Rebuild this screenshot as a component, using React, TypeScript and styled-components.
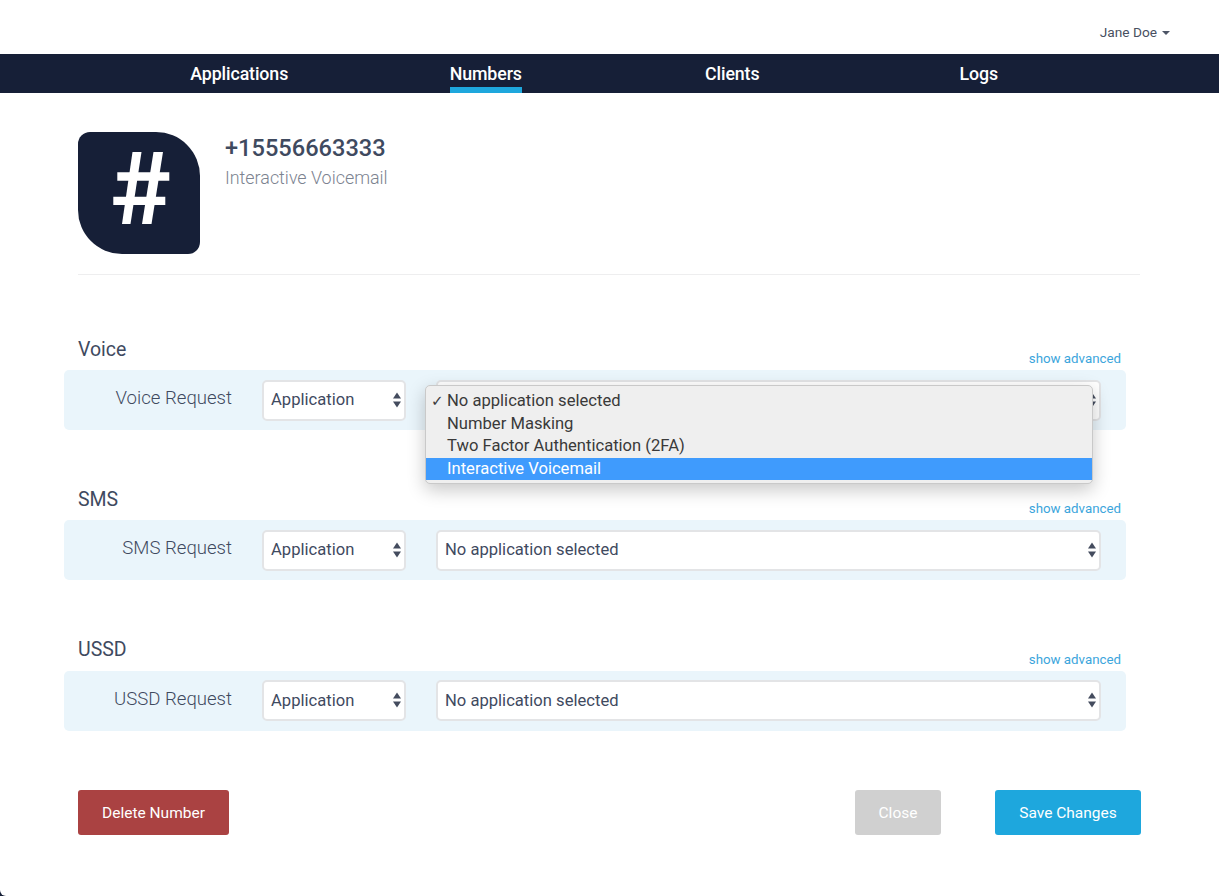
import React from "react";
import styled, { createGlobalStyle } from "styled-components";

const Global = createGlobalStyle`
  html, body { margin: 0; padding: 0; background: #161f37; }
  body { font-family: Roboto, "Liberation Sans", sans-serif; color: #3f4a5f; }
  * { box-sizing: border-box; }
`;

const Page = styled.div`
  width: 1219px;
  height: 896px;
  overflow: hidden;
  background: #fff;
  border-bottom-left-radius: 6px;
`;
const TopBar = styled.header`
  height: 54px;
  display: flex;
  justify-content: flex-end;
  align-items: center;
  gap: 5px;
  padding: 10px 49px 0 0;
  font-size: 13.7px;
  color: #48505f;
`;
const Caret = styled.span`
  width: 0;
  height: 0;
  margin-top: 2px;
  border-left: 4px solid transparent;
  border-right: 4px solid transparent;
  border-top: 4px solid #4d5566;
`;
const Nav = styled.nav`
  height: 39px;
  background: #161f37;
  display: grid;
  grid-template-columns: repeat(4, 246.5px);
  padding-left: 116px;
`;
const NavCell = styled.div`
  display: flex;
  justify-content: center;
`;
const NavItem = styled.a<{ $active?: boolean }>`
  color: #fff;
  font-size: 17.8px;
  font-weight: 500;
  line-height: 39px;
  letter-spacing: -0.1px;
  border-bottom: 6px solid ${(p) => (p.$active ? "#1ea7dd" : "transparent")};
  height: 39px;
`;
const Content = styled.main`
  padding: 39px 78px 0 78px;
`;
const Profile = styled.section`
  display: flex;
  gap: 25px;
  margin-right: 1px;
  padding-bottom: 20px;
  border-bottom: 1px solid #eeeeef;
`;
const Avatar = styled.div`
  width: 122px;
  height: 122px;
  background: #161f37;
  border-radius: 12px 44px 12px 44px;
  display: flex;
  align-items: center;
  justify-content: center;
`;
const HashMark = styled.svg`
  margin: 0 0 10px 5px;
`;
const Identity = styled.div`
  padding-top: 1px;
`;
const Number = styled.h1`
  margin: 0;
  font-size: 23.6px;
  line-height: 30px;
  font-weight: 500;
  color: #3f4a5f;
`;
const Subtitle = styled.div`
  margin-top: 4px;
  font-size: 17.9px;
  line-height: 22px;
  font-weight: 300;
  color: #7c8390;
`;
const Sections = styled.div`
  margin-top: 59px;
  margin-left: -14px;
  margin-right: 15px;
  display: flex;
  flex-direction: column;
  gap: 54.25px;
  position: relative;
`;
const SectionHead = styled.div`
  height: 36px;
  display: flex;
  justify-content: space-between;
  align-items: flex-start;
  padding: 0 5px 0 14px;
`;
const SectionTitle = styled.h2`
  margin: 2.5px 0 0;
  font-size: 19.5px;
  line-height: 26px;
  font-weight: 400;
  color: #3f4a5f;
`;
const Advanced = styled.a`
  margin-top: 16px;
  font-size: 13.3px;
  line-height: 18px;
  color: #3ba5dc;
`;
const Row = styled.div`
  height: 60px;
  background: #eaf5fb;
  border-radius: 5px;
  display: flex;
  align-items: center;
`;
const RowLabel = styled.label`
  width: 168px;
  text-align: right;
  font-size: 18.6px;
  font-weight: 300;
  color: #3f4a5f;
  margin-top: -4px;
`;
const SelectBox = styled.div<{ $w: number; $ml: number }>`
  width: ${(p) => p.$w}px;
  margin-left: ${(p) => p.$ml}px;
  height: 41px;
  background: #fff;
  border: 2px solid #e3e4e6;
  border-radius: 5px;
  display: flex;
  align-items: center;
  justify-content: space-between;
  padding: 0 2px 1px 7px;
  font-size: 16.6px;
  color: #3f4a5f;
`;
const Menu = styled.div`
  position: absolute;
  left: 361px;
  top: 51px;
  width: 668px;
  height: 99px;
  padding: 4px 0;
  background: #efefef;
  border: 1px solid #c9c9c9;
  border-radius: 5px;
  box-shadow: 0 6px 18px rgba(0, 0, 0, 0.22);
  display: flex;
  flex-direction: column;
`;
const MenuItem = styled.div<{ $hl?: boolean }>`
  height: 22.6px;
  line-height: 22.6px;
  padding-left: 21px;
  font-size: 16.6px;
  position: relative;
  color: ${(p) => (p.$hl ? "#fff" : "#3a3a3a")};
  background: ${(p) => (p.$hl ? "#3f9bfd" : "transparent")};
`;
const Check = styled.span`
  position: absolute;
  left: 5px;
  top: 0;
  font-size: 15px;
  font-family: "DejaVu Sans", sans-serif;
`;
const Footer = styled.footer`
  margin-top: 59.5px;
  display: flex;
  align-items: center;
`;
const Btn = styled.button<{ $bg: string; $w: number; $ml?: string }>`
  width: ${(p) => p.$w}px;
  height: 45px;
  margin-left: ${(p) => p.$ml || "0"};
  border: 0;
  border-radius: 3px;
  background: ${(p) => p.$bg};
  color: #fff;
  font-family: inherit;
  font-size: 15.5px;
  font-weight: 400;
`;

const Arrows = () => (
  <svg width="10" height="16" viewBox="0 0 10 16" fill="#444c5e">
    <path d="M5 0.5 L9 6.5 H1 Z" />
    <path d="M5 15.5 L9 9.5 H1 Z" />
  </svg>
);

const Hash = () => (
  <HashMark width="57" height="72" viewBox="0 0 57 72" fill="#fff">
    <path d="M19.5 0 H28.5 L17.5 72 H9 Z" />
    <path d="M40.5 0 H50 L38.5 72 H29 Z" />
    <path d="M4.3 20.3 H56.3 V28.7 H4.3 Z" />
    <path d="M0.3 44.7 H52.3 V53 H0.3 Z" />
  </HashMark>
);

const sections = [
  { title: "Voice", label: "Voice Request" },
  { title: "SMS", label: "SMS Request" },
  { title: "USSD", label: "USSD Request" },
];

export default function App() {
  return (
    <Page>
      <Global />
      <TopBar>
        Jane Doe <Caret />
      </TopBar>
      <Nav>
        <NavCell><NavItem>Applications</NavItem></NavCell>
        <NavCell><NavItem $active>Numbers</NavItem></NavCell>
        <NavCell><NavItem>Clients</NavItem></NavCell>
        <NavCell><NavItem>Logs</NavItem></NavCell>
      </Nav>
      <Content>
        <Profile>
          <Avatar><Hash /></Avatar>
          <Identity>
            <Number>+15556663333</Number>
            <Subtitle>Interactive Voicemail</Subtitle>
          </Identity>
        </Profile>
        <Sections>
          {sections.map((s, i) => (
            <div key={s.title}>
              <SectionHead>
                <SectionTitle>{s.title}</SectionTitle>
                <Advanced>show advanced</Advanced>
              </SectionHead>
              <Row>
                <RowLabel>{s.label}</RowLabel>
                <SelectBox $w={144} $ml={30}><span>Application</span><Arrows /></SelectBox>
                <SelectBox $w={665} $ml={30}><span>{i === 0 ? "" : "No application selected"}</span><Arrows /></SelectBox>
              </Row>
            </div>
          ))}
          <Menu>
            <MenuItem><Check>✓</Check>No application selected</MenuItem>
            <MenuItem>Number Masking</MenuItem>
            <MenuItem>Two Factor Authentication (2FA)</MenuItem>
            <MenuItem $hl>Interactive Voicemail</MenuItem>
          </Menu>
        </Sections>
        <Footer>
          <Btn $bg="#aa4242" $w={151}>Delete Number</Btn>
          <Btn $bg="#d0d0d0" $w={86} $ml="auto">Close</Btn>
          <Btn $bg="#1ea7dd" $w={146} $ml="54px">Save Changes</Btn>
        </Footer>
      </Content>
    </Page>
  );
}
